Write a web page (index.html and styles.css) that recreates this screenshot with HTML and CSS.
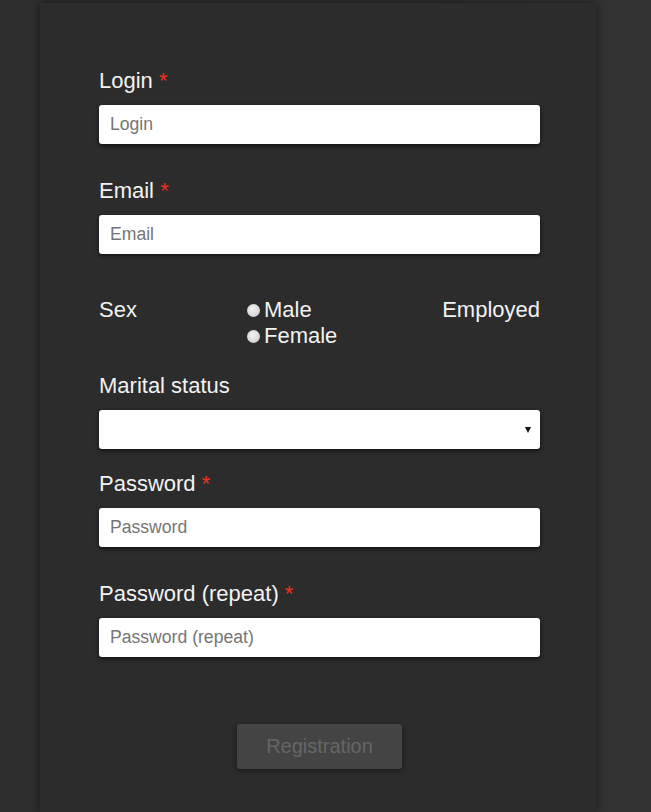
FILE: index.html
```html
<!DOCTYPE html>
<html>
<head>
<meta charset="utf-8">
<link rel="stylesheet" href="styles.css">
</head>
<body>
<div class="card">
  <form class="form">
    <div class="group">
      <label class="label">Login <span class="req">*</span></label>
      <input class="field" type="text" placeholder="Login">
    </div>
    <div class="group">
      <label class="label">Email <span class="req">*</span></label>
      <input class="field" type="text" placeholder="Email">
    </div>
    <div class="row">
      <span class="label">Sex</span>
      <div class="radios">
        <label class="radio"><input type="radio" name="sex"><span>Male</span></label>
        <label class="radio"><input type="radio" name="sex"><span>Female</span></label>
      </div>
      <span class="label">Employed</span>
    </div>
    <div class="group group-select">
      <label class="label">Marital status</label>
      <div class="select-wrap">
        <select class="field select"><option></option></select>
      </div>
    </div>
    <div class="group">
      <label class="label">Password <span class="req">*</span></label>
      <input class="field" type="password" placeholder="Password">
    </div>
    <div class="group">
      <label class="label">Password (repeat) <span class="req">*</span></label>
      <input class="field" type="password" placeholder="Password (repeat)">
    </div>
    <div class="actions">
      <button class="btn" type="button" disabled>Registration</button>
    </div>
  </form>
</div>
</body>
</html>
```
FILE: styles.css
```css
html, body {
  margin: 0;
  padding: 0;
  height: 100%;
}
body {
  background: linear-gradient(to right, #2e2e2e 0, #2e2e2e 300px, #333 600px);
  font-family: "Liberation Sans", Arial, sans-serif;
  overflow: hidden;
}
.card {
  margin: 3px 0 0 40px;
  width: 556px;
  height: 809px;
  background: #2c2c2c;
  box-shadow: 0 0 10px rgba(0, 0, 0, 0.55);
  box-sizing: border-box;
  padding: 65px 56px 0 59px;
  overflow: hidden;
}
.form {
  display: flex;
  flex-direction: column;
}
.group {
  display: flex;
  flex-direction: column;
  margin-bottom: 34px;
}
.label {
  color: #f2f2f2;
  font-size: 22px;
  line-height: 25px;
  margin-bottom: 12px;
}
.req {
  color: #f0321c;
}
.field {
  height: 39px;
  box-sizing: border-box;
  border: none;
  border-radius: 3px;
  background: #fff;
  box-shadow: 0 2px 4px rgba(0, 0, 0, 0.6);
  padding: 0 11px;
  font-family: "Liberation Sans", Arial, sans-serif;
  font-size: 17.6px;
  color: #333;
  outline: none;
}
.field::placeholder {
  color: #757575;
}
.row {
  display: grid;
  grid-template-columns: 148px 1fr auto;
  align-items: start;
  margin-top: 9px;
  margin-bottom: 24px;
}
.row .label {
  margin-bottom: 0;
}
.radios {
  display: flex;
  flex-direction: column;
}
.radio {
  display: flex;
  align-items: center;
  color: #f2f2f2;
  font-size: 22px;
  line-height: 26px;
}
.radio input {
  -webkit-appearance: none;
  appearance: none;
  width: 13px;
  height: 13px;
  margin: 0 4px 0 0;
  border-radius: 50%;
  background: radial-gradient(circle at 45% 40%, #f2f2f2 0, #d8d8d8 60%, #bdbdbd 100%);
  border: none;
}
.group-select {
  margin-bottom: 22px;
}
.select-wrap {
  position: relative;
}
.select {
  -webkit-appearance: none;
  appearance: none;
  width: 100%;
}
.select-wrap::after {
  content: "";
  position: absolute;
  right: 9px;
  top: 17px;
  border-left: 3.5px solid transparent;
  border-right: 3.5px solid transparent;
  border-top: 6px solid #111;
  pointer-events: none;
}
.actions {
  display: flex;
  justify-content: center;
  margin-top: 33px;
}
.btn {
  width: 165px;
  height: 45px;
  border: none;
  border-radius: 3px;
  background: #444;
  color: #666;
  font-family: "Liberation Sans", Arial, sans-serif;
  font-size: 20px;
  box-shadow: 0 2px 6px rgba(0, 0, 0, 0.45);
}
```
